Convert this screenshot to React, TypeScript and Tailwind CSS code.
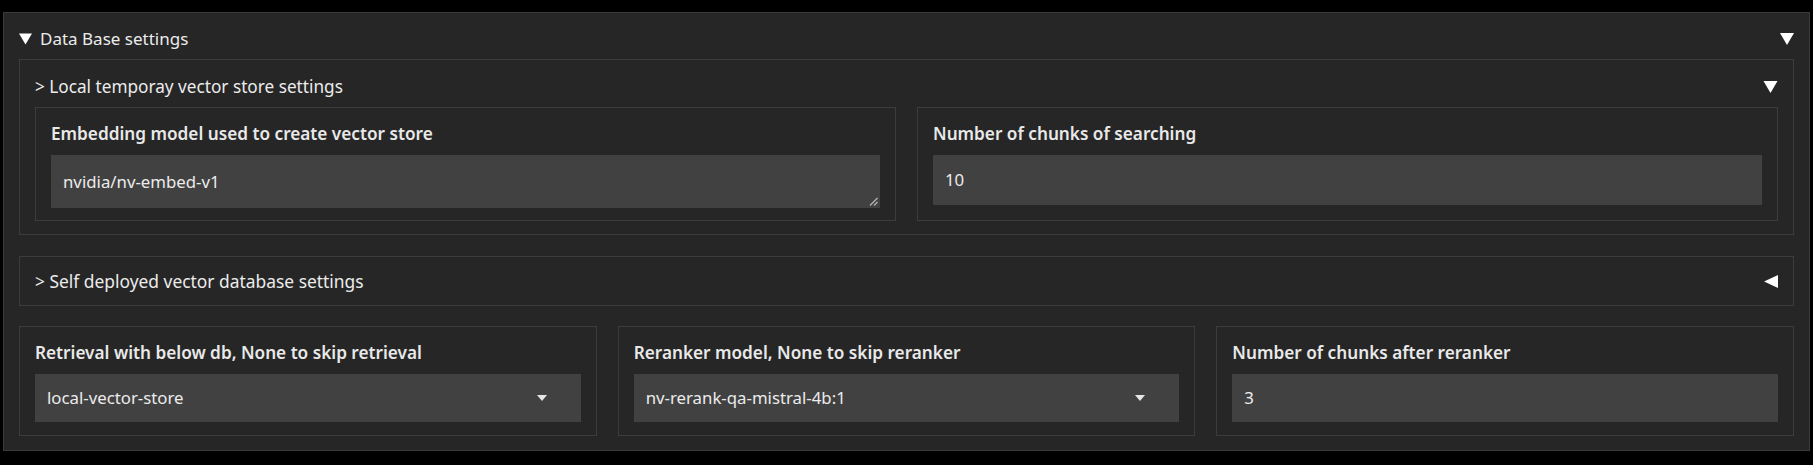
import type { FC, ReactNode } from "react";

const Caret: FC<{ dir?: "down" | "left"; className?: string }> = ({ dir = "down", className = "" }) => {
  return (
    <svg viewBox="0 0 14 12" className={`shrink-0 fill-white ${className}`}>
      {dir === "down" ? <polygon points="0,0 14,0 7,12" /> : <polygon points="14,0 14,12 1,6" />}
    </svg>
  );
};

const SelectArrow: FC = () => {
  return (
    <svg viewBox="0 0 10 6" className="h-[6px] w-[10px] fill-[#e5e5e5]">
      <polygon points="0,0 10,0 5,6" />
    </svg>
  );
};

const Block: FC<{ label: string; children: ReactNode; bottom?: string }> = ({ label, children, bottom = "pb-[15px]" }) => {
  return (
    <div className={`flex flex-col border border-[#3c3c3c] bg-[#262626] px-[15px] pt-[15px] ${bottom}`}>
      <div className="mb-[10px] text-[17.2px] font-semibold leading-[22px] text-[#e9e9e9]">{label}</div>
      {children}
    </div>
  );
};

const TextBox: FC<{ value: string; height: string; grip?: boolean; select?: boolean }> = ({ value, height, grip, select }) => {
  return (
    <div className={`relative flex items-center justify-between bg-[#414141] pl-[12px] pr-[34px] ${height}`}>
      <span className="text-[16.8px] text-[#ececec]">{value}</span>
      {select && <SelectArrow />}
      {grip && (
        <svg viewBox="0 0 9 9" className="absolute bottom-[2px] right-[2px] h-[9px] w-[9px] stroke-[#b5b5b5]">
          <line x1="8.5" y1="1" x2="1" y2="8.5" strokeWidth="1.2" />
          <line x1="8.5" y1="5" x2="5" y2="8.5" strokeWidth="1.2" />
        </svg>
      )}
    </div>
  );
};

export default function App() {
  return (
    <div className="min-h-screen bg-black px-[3px] pt-[12px] font-['Noto_Sans',sans-serif] text-[#ececec]">
      <div className="border border-[#3a3a3a] bg-[#262626] px-[15px] pb-[14px] pt-[14px]">
        <div className="mb-[8px] flex h-[24px] items-center justify-between">
          <div className="flex items-center gap-[8px]">
            <Caret className="h-[12px] w-[13px]" />
            <span className="text-[17px] leading-[24px]">Data Base settings</span>
          </div>
          <Caret className="h-[12px] w-[14px]" />
        </div>

        <div className="border border-[#3c3c3c] px-[15px] pb-[13px] pt-[15px]">
          <div className="mb-[8px] flex h-[24px] items-center justify-between">
            <span className="text-[17.2px] leading-[24px]">&gt; Local temporay vector store settings</span>
            <Caret className="h-[12px] w-[15px]" />
          </div>
          <div className="grid grid-cols-2 gap-[21px]">
            <Block label="Embedding model used to create vector store" bottom="pb-[12px]">
              <TextBox value="nvidia/nv-embed-v1" height="h-[53px]" grip />
            </Block>
            <Block label="Number of chunks of searching">
              <TextBox value="10" height="h-[50px]" />
            </Block>
          </div>
        </div>

        <div className="mt-[21px] flex h-[50px] items-center justify-between border border-[#3c3c3c] px-[15px]">
          <span className="text-[17.4px] leading-[24px]">&gt; Self deployed vector database settings</span>
          <Caret dir="left" className="h-[13px] w-[15px]" />
        </div>

        <div className="mt-[20px] grid grid-cols-3 gap-[21px]">
          <Block label="Retrieval with below db, None to skip retrieval" bottom="pb-[13px]">
            <TextBox value="local-vector-store" height="h-[48px]" select />
          </Block>
          <Block label="Reranker model, None to skip reranker" bottom="pb-[13px]">
            <TextBox value="nv-rerank-qa-mistral-4b:1" height="h-[48px]" select />
          </Block>
          <Block label="Number of chunks after reranker" bottom="pb-[13px]">
            <TextBox value="3" height="h-[48px]" />
          </Block>
        </div>
      </div>
    </div>
  );
}
